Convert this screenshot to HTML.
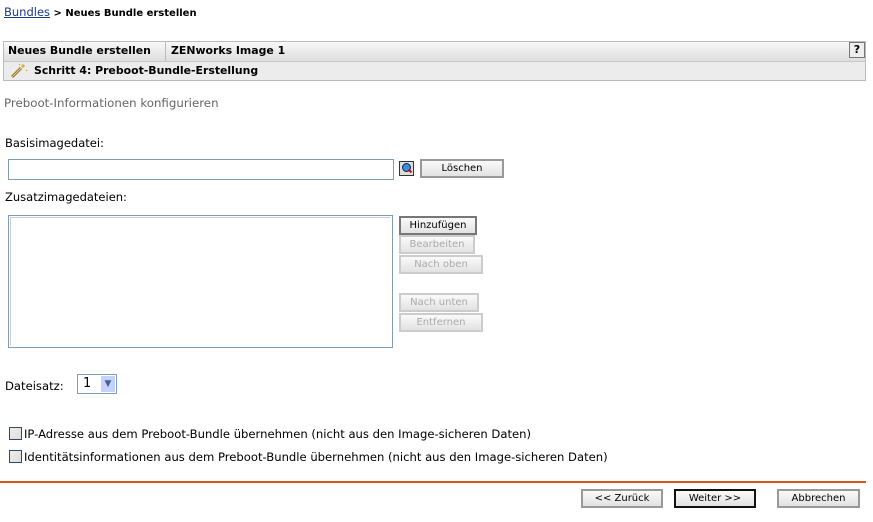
<!DOCTYPE html><html><head><style>
body{margin:0;width:873px;height:522px;background:#fff;font-family:"DejaVu Sans","Liberation Sans",sans-serif;font-size:11.5px;color:#000;position:relative;overflow:hidden}
.a{position:absolute;white-space:nowrap}
.btn{position:absolute;height:15px;border:2px solid #999;background:linear-gradient(#fafafa,#e2e2e2);font-size:10px;text-align:center;line-height:15px;box-sizing:content-box}
.dis{border-color:#ccc;color:#aaa}
.cb{position:absolute;width:11px;height:11px;border:1px solid #2d4a6e;background:linear-gradient(135deg,#eee,#ddd)}
</style></head><body>
<div class="a" style="left:4px;top:5px;font-size:11px"><span style="color:#1a3a8a;text-decoration:underline;font-size:11.5px">Bundles</span> <b style="font-size:10px">&gt; Neues Bundle erstellen</b></div>
<div class="a" style="left:3px;top:41px;width:863px;height:40px;border:1px solid #bbb;background:#ececec;box-sizing:border-box"></div>
<div class="a" style="left:4px;top:42px;width:861px;height:19px;background:linear-gradient(#f8f8f8,#dedede);border-bottom:1px solid #c8c8c8"></div>
<div class="a" style="left:165px;top:42px;width:1px;height:19px;background:#bbb"></div>
<div class="a" style="left:8px;top:44px;font-size:10.9px;font-weight:bold">Neues Bundle erstellen</div>
<div class="a" style="left:171px;top:44px;font-size:10.9px;font-weight:bold">ZENworks Image 1</div>
<div class="a" style="left:849px;top:42px;width:14px;height:14px;border:1px solid #777;background:#eee;font-weight:bold;font-size:11px;text-align:center;line-height:14px">?</div>
<svg class="a" style="left:10px;top:63px" width="18" height="16"><path d="M2 14 L11 5" stroke="#8a6d1e" stroke-width="3"/><path d="M2 14 L11 5" stroke="#e8d48a" stroke-width="1"/><path d="M13 1v4M11 3h4M16 7l1 1M9 1l1 1" stroke="#c9a020" stroke-width="1"/></svg>
<div class="a" style="left:34px;top:64px;font-size:10.9px;font-weight:bold">Schritt 4: Preboot-Bundle-Erstellung</div>
<div class="a" style="left:4px;top:96px;font-size:11.8px;color:#666">Preboot-Informationen konfigurieren</div>
<div class="a" style="left:5px;top:136px;font-size:11.5px">Basisimagedatei:</div>
<div class="a" style="left:8px;top:159px;width:386px;height:21px;border:1px solid #7f9db9;box-sizing:border-box"></div>
<div class="a" style="left:399px;top:161px;width:13px;height:13px;border:1px solid #333;background:#ddd"><div style="position:absolute;left:2px;top:1px;width:7px;height:7px;border-radius:50%;background:#3a8fd8;border:1px solid #125"></div><div style="position:absolute;left:8px;top:8px;width:4px;height:2px;background:#c00;transform:rotate(45deg)"></div></div>
<div class="btn" style="left:420px;top:159px;width:80px">Löschen</div>
<div class="a" style="left:5px;top:190px;font-size:11.5px">Zusatzimagedateien:</div>
<div class="a" style="left:8px;top:215px;width:385px;height:133px;border:1px solid #7f9db9;box-sizing:border-box"><div style="position:absolute;inset:1px;border:1px solid #ccc;border-right-color:#fff;border-bottom-color:#fff"></div></div>
<div class="btn" style="left:399px;top:216px;width:74px;border-color:#777">Hinzufügen</div>
<div class="btn dis" style="left:399px;top:235px;width:72px">Bearbeiten</div>
<div class="btn dis" style="left:399px;top:255px;width:80px">Nach oben</div>
<div class="btn dis" style="left:399px;top:293px;width:76px">Nach unten</div>
<div class="btn dis" style="left:399px;top:313px;width:80px">Entfernen</div>
<div class="a" style="left:5px;top:379px;font-size:11.6px">Dateisatz:</div>
<div class="a" style="left:77px;top:374px;width:40px;height:20px;border:1px solid #7f9db9;box-sizing:border-box;font-size:13px;padding-left:5px;line-height:18px">1</div>
<div class="a" style="left:101px;top:376px;width:14px;height:16px;background:#c3d3fd;color:#4d6185;font-size:9px;text-align:center;line-height:16px">&#9660;</div>
<div class="cb" style="left:9px;top:427px"></div>
<div class="a" style="left:24px;top:427px;font-size:11.6px">IP-Adresse aus dem Preboot-Bundle übernehmen (nicht aus den Image-sicheren Daten)</div>
<div class="cb" style="left:9px;top:450px"></div>
<div class="a" style="left:24px;top:450px;font-size:11.6px">Identitätsinformationen aus dem Preboot-Bundle übernehmen (nicht aus den Image-sicheren Daten)</div>
<div class="a" style="left:0;top:481px;width:866px;height:2px;background:#d4571b"></div>
<div class="btn" style="left:581px;top:489px;width:78px">&lt;&lt; Zurück</div>
<div class="btn" style="left:674px;top:489px;width:78px;border-color:#111">Weiter &gt;&gt;</div>
<div class="btn" style="left:777px;top:489px;width:79px">Abbrechen</div>
</body></html>
